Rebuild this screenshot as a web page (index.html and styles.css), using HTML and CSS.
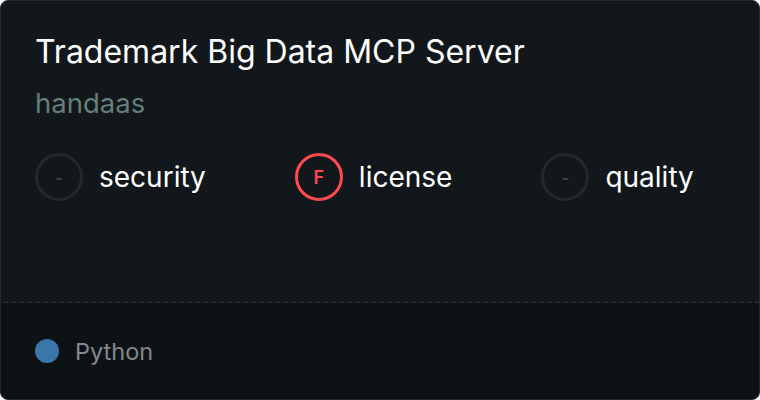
FILE: index.html
```html
<!DOCTYPE html>
<html>
<head>
<meta charset="utf-8">
<link rel="stylesheet" href="styles.css">
</head>
<body>
<div class="card">
  <div class="main">
    <div class="title">Trademark Big Data MCP Server</div>
    <div class="author">handaas</div>
    <div class="scores">
      <div class="score"><span class="ring">-</span><span class="label">security</span></div>
      <div class="score"><span class="ring fail">F</span><span class="label">license</span></div>
      <div class="score"><span class="ring">-</span><span class="label">quality</span></div>
    </div>
  </div>
  <div class="footer">
    <span class="dot"></span><span class="lang">Python</span>
  </div>
</div>
</body>
</html>
```
FILE: styles.css
```css
html, body {
  margin: 0;
  padding: 0;
  background: #ffffff;
}
body {
  width: 760px;
  height: 400px;
  font-family: Inter, "Noto Sans", sans-serif;
}
.card {
  box-sizing: border-box;
  width: 760px;
  height: 400px;
  border: 1px solid #23292d;
  border-radius: 8px;
  background: #11171a;
  overflow: hidden;
  display: flex;
  flex-direction: column;
}
.main {
  flex: 1;
  padding: 31px 34px 0 34px;
}
.title {
  color: #ffffff;
  font-size: 32px;
  line-height: 40px;
}
.author {
  margin-top: 14px;
  color: #647f7a;
  font-size: 27.5px;
  line-height: 34px;
}
.scores {
  margin-top: 33px;
  display: flex;
  gap: 89px;
  align-items: center;
}
.score {
  display: flex;
  align-items: center;
  gap: 16px;
}
.ring {
  box-sizing: border-box;
  width: 48px;
  height: 48px;
  border-radius: 50%;
  border: 3px solid #22292c;
  color: #3a4145;
  display: flex;
  align-items: center;
  justify-content: center;
  font-size: 18px;
  font-weight: 600;
}
.ring.fail {
  border-color: #ff4a4f;
  color: #ff4a4f;
}
.label {
  color: #ffffff;
  font-size: 28px;
  line-height: 34px;
}
.footer {
  box-sizing: border-box;
  height: 97px;
  padding-top: 1px;
  background-color: #0d1215;
  background-image: repeating-linear-gradient(to right, #2b3337 0 5px, transparent 5px 8px);
  background-size: 100% 1px;
  background-repeat: no-repeat;
  background-position: 2px 0;
  display: flex;
  align-items: center;
  padding-left: 34px;
  gap: 16px;
}
.dot {
  width: 24px;
  height: 24px;
  border-radius: 50%;
  background: #3b76ab;
}
.lang {
  color: #84898d;
  font-size: 23.5px;
}
```
